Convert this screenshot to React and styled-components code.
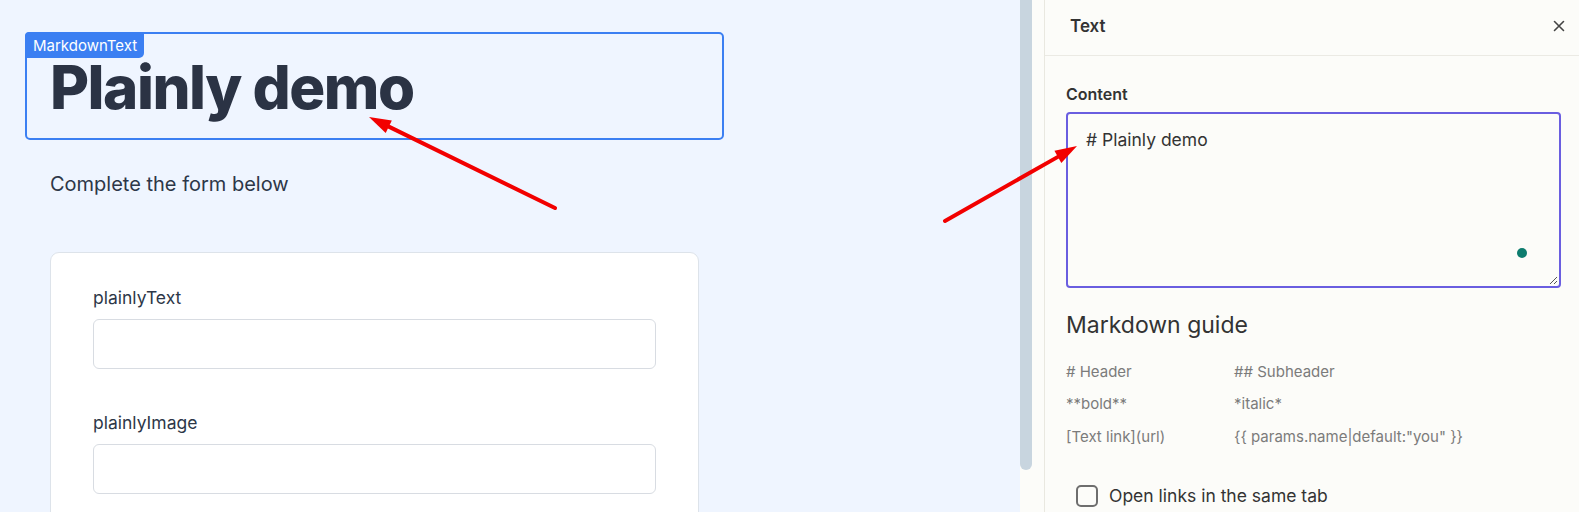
import React from 'react';
import styled, { createGlobalStyle } from 'styled-components';

const GlobalStyle = createGlobalStyle`
  html, body {
    margin: 0;
    padding: 0;
    font-family: Inter, "Noto Sans", sans-serif;
    color: #2d3748;
  }
  * {
    box-sizing: border-box;
  }
`;

const Page = styled.div`
  position: relative;
  display: flex;
  width: 1579px;
  height: 512px;
  overflow: hidden;
`;

const Canvas = styled.div`
  width: 1020px;
  flex-shrink: 0;
  background: #eff5ff;
  padding: 32px 0 0 25px;
`;

const SelectedBlock = styled.div`
  position: relative;
  width: 699px;
  height: 108px;
  border: 2px solid #3b7ff2;
  border-radius: 5px;
  padding: 18px 0 0 23px;
`;

const BlockBadge = styled.span`
  position: absolute;
  top: -2px;
  left: -2px;
  height: 26px;
  padding: 0 7px 0 8px;
  display: flex;
  align-items: center;
  background: #3b7ff2;
  color: #fff;
  font-size: 15px;
  border-radius: 4px 0 5px 0;
`;

const Heading = styled.h1`
  margin: 0;
  font-size: 60px;
  line-height: 70px;
  font-weight: 800;
  letter-spacing: -0.025em;
  color: #2b3344;
`;

const Intro = styled.p`
  margin: 31px 0 0 25px;
  font-size: 20px;
  line-height: 26px;
  color: #2d3748;
`;

const FormCard = styled.div`
  margin: 55px 0 0 25px;
  width: 649px;
  height: 300px;
  background: #fff;
  border: 1px solid #dde3ea;
  border-radius: 9px;
  padding: 33px 42px;
`;

const Field = styled.div`
  display: flex;
  flex-direction: column;
  gap: 9px;
  margin-bottom: 42px;
`;

const FieldLabel = styled.label`
  font-size: 17.5px;
  line-height: 24px;
  font-weight: 400;
  color: #2d3748;
`;

const TextInput = styled.div`
  height: 50px;
  border: 1px solid #d8dce2;
  border-radius: 6px;
  background: #fff;
`;

const Gutter = styled.div`
  width: 24px;
  flex-shrink: 0;
  background: #fcfcf9;
`;

const Thumb = styled.div`
  width: 12px;
  height: 470px;
  background: #c8d5df;
  border-radius: 0 0 6px 6px;
`;

const Panel = styled.aside`
  flex: 1;
  background: #fcfcf9;
  border-left: 1px solid #e9e8e0;
`;

const PanelHeader = styled.div`
  height: 56px;
  display: flex;
  align-items: center;
  justify-content: space-between;
  padding: 0 14px 4px 25px;
  border-bottom: 1px solid #ebeae4;
`;

const PanelTitle = styled.h2`
  margin: 0;
  font-size: 17px;
  font-weight: 600;
  color: #333;
`;

const CloseButton = styled.button`
  border: none;
  background: none;
  padding: 0;
  width: 12px;
  height: 12px;
  display: flex;
  color: #444;
`;

const PanelBody = styled.div`
  padding: 28px 18px 0 21px;
`;

const SectionLabel = styled.div`
  font-size: 16px;
  line-height: 20px;
  font-weight: 600;
  color: #333;
  margin-bottom: 8px;
`;

const EditorWrap = styled.div`
  position: relative;
  height: 176px;
  border: 2px solid #6a5ee0;
  border-radius: 4px;
  padding: 14px 18px;
  font-size: 17.5px;
  line-height: 24px;
  color: #333;
`;

const StatusDot = styled.span`
  position: absolute;
  right: 32px;
  bottom: 28px;
  width: 10px;
  height: 10px;
  border-radius: 50%;
  background: #0d7c6e;
`;

const ResizeGrip = styled.svg`
  position: absolute;
  right: 1px;
  bottom: 1px;
`;

const GuideTitle = styled.h3`
  margin: 23px 0 16px;
  font-size: 23px;
  line-height: 28px;
  font-weight: 400;
  color: #333;
`;

const GuideGrid = styled.div`
  display: grid;
  grid-template-columns: 168px auto;
  grid-auto-rows: 32.5px;
  align-items: center;
  font-size: 15px;
  color: #7b7b7b;
`;

const CheckRow = styled.label`
  display: flex;
  align-items: center;
  gap: 11px;
  margin: 32px 0 0 10px;
  font-size: 17.5px;
  color: #333;
`;

const CheckBox = styled.span`
  width: 22px;
  height: 22px;
  border: 2px solid #6e6e6e;
  border-radius: 5px;
`;

const Annotations = styled.svg`
  position: absolute;
  inset: 0;
  pointer-events: none;
`;

function Arrow({ x1, y1, x2, y2 }) {
  const angle = Math.atan2(y2 - y1, x2 - x1);
  const len = 22;
  const half = 7;
  const bx = x2 - len * Math.cos(angle);
  const by = y2 - len * Math.sin(angle);
  const px = -Math.sin(angle) * half;
  const py = Math.cos(angle) * half;
  return (
    <g>
      <line x1={x1} y1={y1} x2={bx} y2={by} stroke="#f20000" strokeWidth="4" strokeLinecap="round" />
      <polygon
        points={`${x2},${y2} ${bx + px},${by + py} ${bx - px},${by - py}`}
        fill="#f20000"
      />
    </g>
  );
}

const guide = [
  ['# Header', '## Subheader'],
  ['**bold**', '*italic*'],
  ['[Text link](url)', '{{ params.name|default:"you" }}'],
];

export default function App() {
  return (
    <>
      <GlobalStyle />
      <Page>
        <Canvas>
          <SelectedBlock>
            <BlockBadge>MarkdownText</BlockBadge>
            <Heading>Plainly demo</Heading>
          </SelectedBlock>
          <Intro>Complete the form below</Intro>
          <FormCard>
            <Field>
              <FieldLabel>plainlyText</FieldLabel>
              <TextInput />
            </Field>
            <Field>
              <FieldLabel>plainlyImage</FieldLabel>
              <TextInput />
            </Field>
          </FormCard>
        </Canvas>
        <Gutter>
          <Thumb />
        </Gutter>
        <Panel>
          <PanelHeader>
            <PanelTitle>Text</PanelTitle>
            <CloseButton aria-label="Close">
              <svg width="12" height="12" viewBox="0 0 12 12">
                <path d="M1.5 1.5 L10.5 10.5 M10.5 1.5 L1.5 10.5" stroke="currentColor" strokeWidth="1.6" strokeLinecap="round" />
              </svg>
            </CloseButton>
          </PanelHeader>
          <PanelBody>
            <SectionLabel>Content</SectionLabel>
            <EditorWrap>
              # Plainly demo
              <StatusDot />
              <ResizeGrip width="10" height="10" viewBox="0 0 10 10">
                <path d="M9 2 L2 9 M9 6 L6 9" stroke="#555" strokeWidth="1" />
              </ResizeGrip>
            </EditorWrap>
            <GuideTitle>Markdown guide</GuideTitle>
            <GuideGrid>
              {guide.map(([a, b]) => (
                <React.Fragment key={a}>
                  <span>{a}</span>
                  <span>{b}</span>
                </React.Fragment>
              ))}
            </GuideGrid>
            <CheckRow>
              <CheckBox />
              Open links in the same tab
            </CheckRow>
          </PanelBody>
        </Panel>
        <Annotations width="1579" height="512">
          <Arrow x1={555} y1={208} x2={369} y2={117} />
          <Arrow x1={945} y1={221} x2={1077} y2={146} />
        </Annotations>
      </Page>
    </>
  );
}
